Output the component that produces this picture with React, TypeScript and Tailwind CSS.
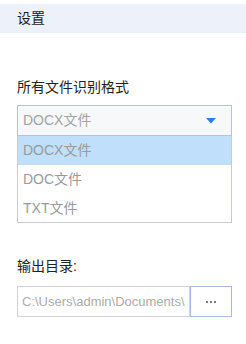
import React from "react";

export default function App() {
  const font = { fontFamily: '"Liberation Sans", "Noto Sans CJK SC", sans-serif' };
  return (
    <div className="w-[246px] h-[344px] bg-white pt-[4px]" style={font}>
      <div className="h-[29px] bg-[#edf2fa] flex items-center pl-[17px] text-[14px] text-[#1a1a1a]">
        设置
      </div>
      <div className="ml-[17px] w-[215px]">
        <div className="mt-[45px] h-[18px] flex items-center text-[14px] text-[#222]">所有文件识别格式</div>
        <div className="mt-[9px] h-[31px] border border-[#b9c3d6] bg-[#f6f8fa] flex items-center justify-between pl-[5px] pr-[15px]">
          <span className="text-[14px] text-[#a3a3a3]">DOCX文件</span>
          <svg width="10" height="6" viewBox="0 0 10 6">
            <polygon points="0,0 10,0 5,5.5" fill="#2d7cf0" />
          </svg>
        </div>
        <div className="border border-t-0 border-[#c9cad6] flex flex-col">
          <div className="h-[29px] bg-[#bfdffb] flex items-center pl-[5px] text-[14px] text-[#9a9a9a]">DOCX文件</div>
          <div className="h-[29px] flex items-center pl-[5px] text-[14px] text-[#9a9a9a]">DOC文件</div>
          <div className="h-[28px] flex items-center pl-[5px] text-[14px] text-[#9a9a9a]">TXT文件</div>
        </div>
        <div className="mt-[34px] h-[18px] flex items-center text-[14px] text-[#222]">输出目录:</div>
        <div className="mt-[11px] flex h-[31px]">
          <div className="w-[173px] shrink-0 border border-[#d3d3d3] flex items-center pl-[4px] overflow-hidden whitespace-nowrap text-[13px] text-[#ababab]">
            C:\Users\admin\Documents\
          </div>
          <button className="flex-1 border border-[#aabada] bg-white flex items-center justify-center gap-[2px]">
            <span className="w-[2px] h-[2px] bg-[#777]" />
            <span className="w-[2px] h-[2px] bg-[#777]" />
            <span className="w-[2px] h-[2px] bg-[#777]" />
          </button>
        </div>
      </div>
    </div>
  );
}
